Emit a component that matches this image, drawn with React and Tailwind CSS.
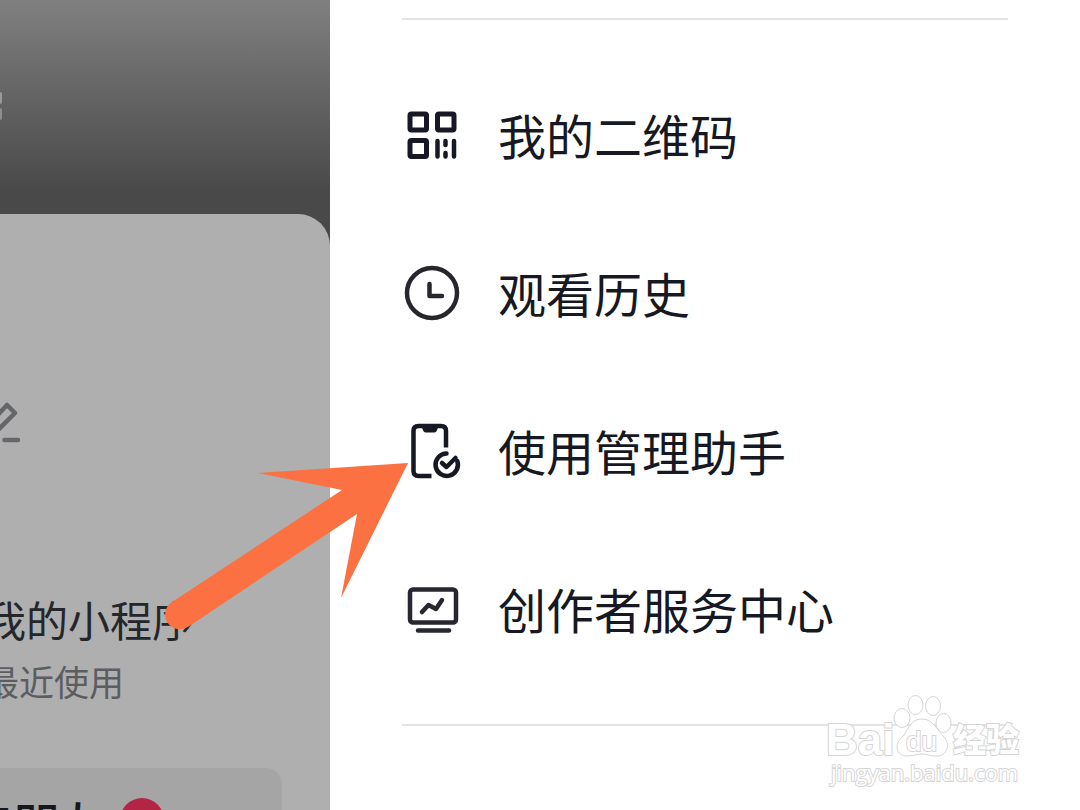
import React from "react";

const QrIcon = () => (
  <svg viewBox="0 0 60 60" className="size-15" fill="none" stroke="#161823" strokeWidth="5" strokeLinecap="round" strokeLinejoin="round" aria-hidden="true">
    <rect x="8" y="8" width="16.500" height="16" rx="1.500" />
    <rect x="35.500" y="8" width="16.500" height="16" rx="1.500" />
    <rect x="8" y="34.500" width="16.500" height="16" rx="1.500" />
    <path strokeWidth="4.500" d="M35.500 35v15.500M43.500 35v4M43.500 47v3.500M52 35v15.500" />
  </svg>
);

const ClockIcon = () => (
  <svg viewBox="0 0 60 60" className="size-15" fill="none" stroke="#26272c" strokeWidth="4.500" strokeLinecap="round" strokeLinejoin="round" aria-hidden="true">
    <circle cx="30" cy="29" r="25" />
    <path d="M27.500 20v12h12.500" />
  </svg>
);

const PhoneIcon = () => (
  <svg viewBox="0 0 60 60" className="size-15" fill="none" stroke="#161823" strokeWidth="4.500" strokeLinecap="butt" strokeLinejoin="round" aria-hidden="true">
    <path d="M29.500 54H16.500q-5 0-5-5V9q0-5 5-5h22.500q5 0 5 5v16.500" />
    <path fill="#161823" stroke="none" d="M20 3h16v2q-1 5.500-4 5.500h-8q-3 0-4-5.500z" />
    <path strokeLinecap="round" d="M44.500 31.500a11.200 11.200 0 1 0 10.800 7.500" />
    <path strokeLinecap="round" d="m40 41 4.500 4 9-9" />
  </svg>
);

const MonitorIcon = () => (
  <svg viewBox="0 0 60 60" className="size-15" fill="none" stroke="#26272f" strokeWidth="4.500" strokeLinecap="round" strokeLinejoin="round" aria-hidden="true">
    <rect x="8" y="9.500" width="46" height="33" rx="3" />
    <path d="m20 32 6.500-7 7.500 4 6-9M16 50.500h31" />
  </svg>
);

const items = [
  { label: "我的二维码", Icon: QrIcon },
  { label: "观看历史", Icon: ClockIcon },
  { label: "使用管理助手", Icon: PhoneIcon },
  { label: "创作者服务中心", Icon: MonitorIcon },
];

function Profile() {
  return (
    <section className="flex w-[330px] shrink-0 flex-col overflow-hidden bg-[#494949]">
      <div className="h-[214px] shrink-0 bg-linear-to-b from-[#808080] to-[#494949] to-90% pt-[92px]">
        <div className="flex w-[2px] flex-col gap-1">
          <span className="h-3 rounded-r-sm bg-[#9a9a9a]" />
          <span className="h-3 rounded-r-sm bg-[#8e8e8e]" />
        </div>
      </div>
      <div className="flex grow flex-col rounded-tr-[32px] bg-[#afafaf] pt-[186px]">
        <button type="button" aria-label="编辑" className="w-6">
          <svg viewBox="0 0 24 44" className="h-11 w-6" fill="none" stroke="#65666a" strokeWidth="4.500" strokeLinecap="round" strokeLinejoin="round" aria-hidden="true">
            <path d="M-8 21 7 5l8 8L-4 32M4.500 40h13.500" />
          </svg>
        </button>
        <div className="mt-[143px] flex flex-col whitespace-nowrap">
          <h2 className="-ml-4 text-[42px] leading-[64px] text-[#25262c]">我的小程序</h2>
          <p className="-ml-4 text-[35px] leading-[60px] text-[#5c5d61]">最近使用</p>
        </div>
        <div className="mt-[57px] mr-12 flex h-[42px] items-start gap-3 overflow-hidden rounded-tr-2xl bg-[#a5a5a5] whitespace-nowrap">
          <span className="-ml-[84px] pt-6 text-[48px] leading-[60px] font-medium text-[#17181e]">添加朋友</span>
          <span className="mt-[30px] flex size-11 shrink-0 items-start justify-center rounded-full bg-[#b42545] pt-1 text-[30px] leading-10 text-[#d9a0ac]">2</span>
        </div>
      </div>
    </section>
  );
}

function Arrow() {
  return (
    <svg viewBox="0 0 250 180" className="pointer-events-none absolute top-[458px] left-[162px] w-[250px]" aria-hidden="true">
      <path fill="#fb7141" d="M246 5 96 15l84 17L10 144a14.500 14.500 0 0 0 16 25L195 56l-16 84z" />
    </svg>
  );
}

function Watermark() {
  return (
    <svg viewBox="0 0 210 100" className="pointer-events-none absolute right-[50px] bottom-[15px] w-[210px]" fill="#fff" stroke="#d5d5d5" strokeWidth="1" role="img" aria-label="Baidu 经验">
      <g className="font-['Liberation_Sans','Noto_Sans_CJK_SC',sans-serif]" paintOrder="stroke" strokeWidth="2">
        <text x="6" y="60" fontSize="44" fontWeight="700">Bai</text>
      </g>
      <ellipse cx="82" cy="23" rx="8" ry="9.500" />
      <ellipse cx="95.500" cy="10" rx="7.500" ry="9.500" />
      <ellipse cx="113" cy="11" rx="7.500" ry="9.500" />
      <ellipse cx="123.500" cy="28" rx="7.500" ry="9.500" />
      <path d="M102 24c-13 0-14 13-20 18-8 7-6 19 5 19 6 0 9-2 15-2s10 3 16 2c10-1 12-13 6-19-7-6-10-18-22-18z" />
      <g className="font-['Liberation_Sans','Noto_Sans_CJK_SC',sans-serif]" paintOrder="stroke" strokeWidth="2">
        <text x="86" y="56" fontSize="28">du</text>
        <text x="133" y="57" fontSize="33" fontWeight="900">经验</text>
      </g>
      <g className="font-['Open_Sans',sans-serif]" paintOrder="stroke" strokeWidth="2">
        <text x="11" y="86" fontSize="22">jingyan.baidu.com</text>
      </g>
    </svg>
  );
}

export default function App() {
  return (
    <div className="relative flex h-screen overflow-hidden bg-white font-['Noto_Sans_CJK_SC',sans-serif]">
      <Profile />
      <nav className="flex grow flex-col px-[72px]">
        <hr className="mt-[18px] border-t-2 border-[#e4e4e6]" />
        <ul className="flex flex-col pt-[37px] pb-[35px]">
          {items.map(({ label, Icon }) => (
            <li key={label}>
              <a href="#" className="flex h-[158px] items-center gap-9 whitespace-nowrap text-[#161823]">
                <Icon />
                <span className="pb-1 text-[48px] leading-[72px]">{label}</span>
              </a>
            </li>
          ))}
        </ul>
        <hr className="border-t-2 border-[#e4e4e6]" />
      </nav>
      <Arrow />
      <Watermark />
    </div>
  );
}
